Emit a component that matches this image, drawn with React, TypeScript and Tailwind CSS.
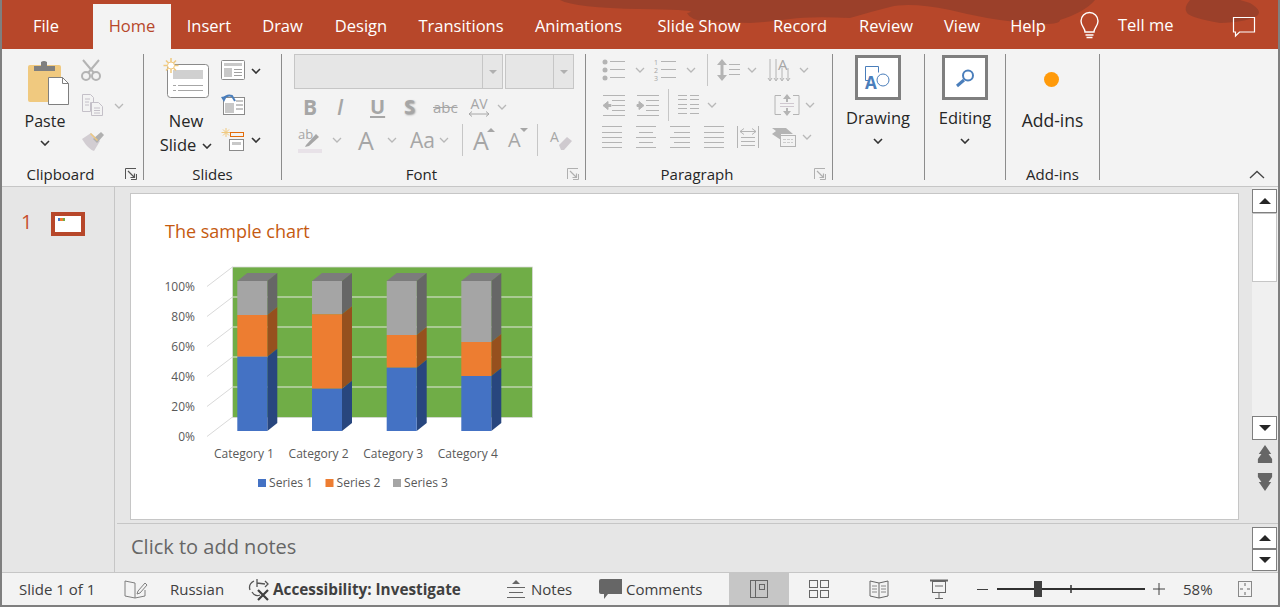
import React from "react";

const G = "#b4b4b4";
const D = "#a6a6a6";

function I({ x, y, w, h, children }: { x: number; y: number; w: number; h: number; children?: React.ReactNode }) {
  return (
    <svg width={w} height={h} viewBox={`${x} ${y} ${w} ${h}`} className="block shrink-0 overflow-visible" fill="none">
      {children}
    </svg>
  );
}

function Chev({ dark = false }: { dark?: boolean }) {
  return (
    <svg width="10" height="6" viewBox="0 0 10 6" fill="none" className="block shrink-0">
      <path d="M1 1l4 4 4-4" stroke={dark ? "#333333" : "#b8b8b8"} strokeWidth={dark ? 1.6 : 1.3} />
    </svg>
  );
}

function Launcher({ dark = false }: { dark?: boolean }) {
  const c = dark ? "#555555" : "#b0b0b0";
  return (
    <svg width="12" height="12" viewBox="0 0 12 12" fill="none" className="block">
      <path d="M11.5 6v5.5H6M.5 11V.5H11" stroke={c} />
      <path d="M3 3l6.5 6.5M9.5 5.5v4h-4" stroke={c} strokeWidth="1.2" />
    </svg>
  );
}

function Label({ children, launcher, dark }: { children: React.ReactNode; launcher?: boolean; dark?: boolean }) {
  return (
    <div className="flex h-[13px] items-center text-[15px] leading-[18px] text-[#262626]">
      <div className="flex-1 text-center">{children}</div>
      {launcher && (
        <div className="flex h-full w-[24px] items-start justify-start pl-[6px] pt-[1px]">
          <Launcher dark={dark} />
        </div>
      )}
    </div>
  );
}

function Group({ w, children, label, launcher, dark }: { w: string; children: React.ReactNode; label?: string; launcher?: boolean; dark?: boolean }) {
  return (
    <div className={`${w} flex h-[126px] shrink-0 flex-col border-r border-[#8c8c8c]`}>
      <div className="h-[113px]">{children}</div>
      <Label launcher={launcher} dark={dark}>{label}</Label>
    </div>
  );
}

function HLines({ x, ys, w }: { x: number; ys: number[]; w: number }) {
  return (
    <>
      {ys.map((y) => (
        <path key={y} d={`M${x} ${y + 0.5}h${w}`} stroke={G} />
      ))}
    </>
  );
}

const tabs: [string, string][] = [
  ["Insert", "w-[76px]"],
  ["Draw", "w-[71px]"],
  ["Design", "w-[86px]"],
  ["Transitions", "w-[114px]"],
  ["Animations", "w-[121px]"],
  ["Slide Show", "w-[120px]"],
  ["Record", "w-[82px]"],
  ["Review", "w-[90px]"],
  ["View", "w-[62px]"],
  ["Help", "w-[70px]"],
];

function TabBar() {
  return (
    <div className="relative flex h-[49px] shrink-0 bg-[#b7472a] text-[16.5px] text-white">
      <svg className="absolute left-[-2px] top-0" width="1280" height="49" viewBox="0 0 1280 49">
        <path d="M560 0Q575 8 640 9T687 13Q690 20 705 21T750 23Q770 22 790 19T850 18Q870 12 890 7T950 10Q990 20 1025 23T1060 20Q1085 12 1095 0Z" fill="#9b402a" />
        <path d="M1190 0Q1183 8 1187 13T1220 23Q1245 22 1255 17T1250 3L1240 0Z" fill="#9b402a" />
      </svg>
      <div className="relative flex h-full w-[91px] items-center justify-center pr-[3px] pt-[4px]">File</div>
      <div className="relative mt-[4px] flex h-[45px] w-[78px] items-center justify-center bg-[#f3f3f3] text-[#b7472a]">Home</div>
      {tabs.map(([t, w]) => (
        <div key={t} className={`${w} relative flex h-full items-center justify-center pt-[4px]`}>{t}</div>
      ))}
      <div className="relative ml-[17px] flex h-full items-center pt-[4px]">
        <I x={1080} y={14} w={20} h={25}>
          <path d="M1085 32c0-4-4-6-4-11a8.500 8.500 0 0 1 17 0c0 5-4 7-4 11zM1085.500 35h8M1086.500 37.500h6" stroke="#fff" strokeWidth="1.400" />
        </I>
        <span className="ml-[18px] pb-[3px]">Tell me</span>
      </div>
      <div className="relative ml-[58px] flex h-full items-center pt-[4px]">
        <I x={1232} y={16} w={24} h={22}>
          <path d="M1233.500 17.500h21v14.500h-15l-4 4v-4h-2z" stroke="#fff" strokeWidth="1.200" />
        </I>
      </div>
    </div>
  );
}

function Clipboard() {
  return (
    <Group w="w-[142px]" label="Clipboard" launcher dark>
      <div className="flex">
        <div className="ml-[19px] flex w-[48px] flex-col items-center pt-[6px]">
          <div className="pl-[8px]">
            <I x={28} y={60} w={42} h={46}>
              <rect x="28" y="65" width="33" height="37" rx="2" fill="#f0c97f" />
              <path d="M34 71v-5h7v-4q3-2 6 0v4h8v5z" fill="#7f7f7f" />
              <path d="M48.500 77.500h14l6 6v21h-20z" fill="#fff" stroke="#7f7f7f" />
              <path d="M62.500 77.500v6h6" stroke="#7f7f7f" />
            </I>
          </div>
          <div className="mt-[3px] text-[16px] leading-[24px] text-[#262626]">Paste</div>
          <div className="mt-[7px]"><Chev dark /></div>
        </div>
        <div className="ml-[12px] flex flex-col pt-[5px]">
          <I x={81} y={59} w={22} h={23}>
            <circle cx="86" cy="76" r="4" stroke={G} strokeWidth="2" />
            <circle cx="96" cy="76" r="4" stroke={G} strokeWidth="2" />
            <path d="M83 60l11 13M99 60L88 73" stroke={G} strokeWidth="2" />
          </I>
          <div className="mt-[12px] flex items-center">
            <I x={81} y={94} w={23} h={23}>
              <path d="M82.500 94.500h8l3 3v5h-3v9h-8z" stroke="#c4c0c8" />
              <path d="M91.500 102.500h7l4 4v9h-11z" fill="#f3f3f3" stroke="#c4c0c8" />
              <path d="M85 99h5M85 102h4M85 105h4M94 108h6M94 110.500h6M94 113h6" stroke="#c4c0c8" />
            </I>
            <div className="ml-[10px]"><Chev /></div>
          </div>
          <div className="mt-[13px]">
            <I x={80} y={129} w={24} h={22}>
              <path d="M81 138l9-6 9 8-6 10q-6-2-12-12z" fill="#d2cdd2" />
              <path d="M92 138l8-7 3 3-7 8z" fill="#b0b0b0" />
              <path d="M89 133l1-1 7 7-1 1z" fill="#f0c97f" />
            </I>
          </div>
        </div>
      </div>
    </Group>
  );
}

function Slides() {
  return (
    <Group w="w-[138px]" label="Slides">
      <div className="flex">
        <div className="ml-[19px] flex w-[46px] flex-col items-center pt-[3px] text-[16.5px] leading-[24px] text-[#262626]">
          <I x={163} y={57} w={47} h={42}>
            <rect x="167.500" y="64.500" width="41" height="33" rx="3" fill="#fff" stroke="#8a8a8a" />
            <rect x="173" y="70" width="30" height="9" fill="#d0d0d0" />
            <path d="M173 85.500h3M178 85.500h25M173 90.500h3M178 90.500h25" stroke="#a6a6a6" />
            <path d="M171 58v15M163.500 65.500h15M166 60.500l10 10M176 60.500l-10 10" stroke="#f0c97f" strokeWidth="1.500" />
            <circle cx="171" cy="65.500" r="3.500" fill="#fff" stroke="#f0c97f" />
          </I>
          <div className="mt-[10px]">New</div>
          <div className="flex items-center whitespace-nowrap">Slide<span className="ml-[6px] mt-[2px]"><Chev dark /></span></div>
        </div>
        <div className="ml-[12px] flex flex-col pt-[6px]">
          <div className="flex items-center">
            <I x={222} y={60} w={25} h={21}>
              <rect x="222.500" y="60.500" width="23" height="19" rx="1" fill="#fff" stroke="#8a8a8a" />
              <rect x="225" y="63" width="18" height="3" fill="#c8c8c8" />
              <rect x="225" y="68" width="8" height="9" fill="#c8c8c8" />
              <path d="M235 69.500h8M235 72.500h8M235 75.500h8" stroke="#a0a0a0" />
            </I>
            <div className="ml-[5px]"><Chev dark /></div>
          </div>
          <div className="mt-[13px]">
            <I x={222} y={94} w={25} h={22}>
              <rect x="224.500" y="97.500" width="21" height="17" fill="#fff" stroke="#8a8a8a" />
              <rect x="226" y="103" width="9" height="10" fill="#c8c8c8" />
              <path d="M237 101h7M237 105h7M237 109h7" stroke="#8a8a8a" />
              <path d="M224 99q4-5 9-3l3 5" stroke="#4a7ebb" strokeWidth="2" />
              <path d="M222 97l6-1-3 6z" fill="#4a7ebb" />
            </I>
          </div>
          <div className="mt-[12px] flex items-center">
            <I x={222} y={128} w={25} h={24}>
              <path d="M227 128v9M222.500 132.500h9M224 129.500l6 6M230 129.500l-6 6" stroke="#f0c97f" />
              <rect x="231.500" y="132.500" width="13" height="4" stroke="#e36c0a" />
              <rect x="230.500" y="139.500" width="14" height="11" fill="#fff" stroke="#8a8a8a" />
              <rect x="233" y="142" width="9" height="3" fill="#c8c8c8" />
            </I>
            <div className="ml-[5px]"><Chev dark /></div>
          </div>
        </div>
      </div>
    </Group>
  );
}

function Sep({ h }: { h: string }) {
  return <div className={`${h} w-px shrink-0 bg-[#c6c6c6]`} />;
}

function FontGroup() {
  return (
    <Group w="w-[304px]" label="Font" launcher>
      <div className="pl-[12px]">
        <div className="flex">
          <div className="flex h-[35px] w-[209px] border border-[#c6c6c6] bg-[#e6e6e6]">
            <div className="flex-1 border-r border-[#c6c6c6]" />
            <div className="flex w-[19px] items-center justify-center"><div className="h-0 w-0 border-x-[4px] border-t-[4px] border-x-transparent border-t-[#b0b0b0]" /></div>
          </div>
          <div className="ml-[2px] flex h-[35px] w-[69px] border border-[#c6c6c6] bg-[#e6e6e6]">
            <div className="flex-1 border-r border-[#c6c6c6]" />
            <div className="flex w-[19px] items-center justify-center"><div className="h-0 w-0 border-x-[4px] border-t-[4px] border-x-transparent border-t-[#b0b0b0]" /></div>
          </div>
        </div>
        <div className="mt-[6px] flex h-[24px] items-center text-[#a6a6a6]">
          <span className="ml-[9px] w-[34px] text-[21px] font-bold leading-none">B</span>
          <span className="w-[33px] text-[21px] font-semibold italic leading-none">I</span>
          <span className="w-[34px] text-[20px] font-bold leading-none underline decoration-2 underline-offset-2">U</span>
          <span className="w-[29px] text-[20px] font-bold leading-none [text-shadow:1px_1px_2px_#999]">S</span>
          <span className="w-[34px] text-[15px] leading-none line-through">abc</span>
          <span className="flex w-[24px] flex-col items-center">
            <span className="text-[14px] leading-[14px]">AV</span>
            <svg width="22" height="6" viewBox="0 0 22 6" fill="none"><path d="M1 3h20M4 .5L1 3l3 2.500M18 .5L21 3l-3 2.500" stroke="#a6a6a6" /></svg>
          </span>
          <span className="ml-[6px]"><Chev /></span>
        </div>
        <div className="mt-[6px] flex h-[30px] items-center text-[#a6a6a6]">
          <span className="ml-[4px] w-[24px]">
            <I x={298} y={126} w={25} h={27}>
              <text x="298" y="138" fontFamily="'Open Sans',sans-serif" fontSize="13" fill="#a6a6a6">ab</text>
              <path d="M306 144l10-11 3 3-10 9-4 1z" fill="#a6a6a6" />
              <rect x="298" y="148" width="24" height="4" fill="#e8e2e8" />
            </I>
          </span>
          <span className="ml-[10px] w-[26px]"><Chev /></span>
          <span className="w-[29px] text-[25px] leading-none">A</span>
          <span className="w-[23px]"><Chev /></span>
          <span className="w-[29px] whitespace-nowrap text-[21px] leading-none">Aa</span>
          <span className="w-[23px]"><Chev /></span>
          <span className="mr-[10px]"><Sep h="h-[32px]" /></span>
          <span className="relative w-[35px] text-[25px] leading-none">A
            <span className="absolute left-[14px] top-[0px] h-0 w-0 border-x-[4px] border-b-[4px] border-x-transparent border-b-[#a6a6a6]" />
          </span>
          <span className="relative w-[29px] text-[20px] leading-none">A
            <span className="absolute left-[12px] top-[-2px] h-0 w-0 border-x-[4px] border-t-[4px] border-x-transparent border-t-[#a6a6a6]" />
          </span>
          <Sep h="h-[32px]" />
          <span className="ml-[12px]">
            <I x={550} y={128} w={20} h={24}>
              <text x="550" y="142" fontFamily="'Open Sans',sans-serif" fontSize="14" fill="#a6a6a6">A</text>
              <path d="M559 145l8-8 5 4-8 9h-3z" fill="#cfcacf" />
            </I>
          </span>
        </div>
      </div>
    </Group>
  );
}

function Paragraph() {
  return (
    <Group w="w-[247px]" label="Paragraph" launcher>
      <div className="pl-[16px] pt-[3px]">
        <div className="flex h-[26px] items-center">
          <I x={602} y={58} w={24} h={23}>
            <circle cx="605" cy="61" r="2.500" fill={G} /><circle cx="605" cy="69" r="2.500" fill={G} /><circle cx="605" cy="77" r="2.500" fill={G} />
            <HLines x={610} ys={[60, 68, 76]} w={15} />
          </I>
          <span className="ml-[9px]"><Chev /></span>
          <span className="ml-[9px]">
            <I x={659} y={58} w={23} h={23}>
              <text x="659" y="64" fontSize="7" fill={D} fontFamily="'Open Sans',sans-serif">1</text>
              <text x="659" y="72" fontSize="7" fill={D} fontFamily="'Open Sans',sans-serif">2</text>
              <text x="659" y="80" fontSize="7" fill={D} fontFamily="'Open Sans',sans-serif">3</text>
              <HLines x={666} ys={[60, 68, 76]} w={15} />
            </I>
          </span>
          <span className="ml-[9px]"><Chev /></span>
          <span className="ml-[11px]"><Sep h="h-[32px]" /></span>
          <span className="ml-[9px]">
            <I x={721} y={57} w={24} h={25}>
              <path d="M726 60v18" stroke={G} strokeWidth="3" />
              <path d="M721 64l5-6 5 6zM721 74l5 6 5-6z" fill={G} />
              <HLines x={733} ys={[63, 68, 73]} w={11} />
            </I>
          </span>
          <span className="ml-[6px]"><Chev /></span>
          <span className="ml-[11px]">
            <I x={772} y={57} w={26} h={26}>
              <path d="M774 59v21M780 59v21M786 68v12M792 68v12M772 78l2 3 2-3M778 78l2 3 2-3M784 78l2 3 2-3M790 78l2 3 2-3" stroke={G} />
              <text x="782" y="70" fontSize="15" fill={D} fontFamily="'Open Sans',sans-serif">A</text>
            </I>
          </span>
          <span className="ml-[5px]"><Chev /></span>
        </div>
        <div className="mt-[6px] flex h-[32px] items-center">
          <I x={602} y={93} w={25} h={23}>
            <path d="M603 94.500h22M603 114.500h22M612 99.500h13M612 104.500h13M612 109.500h13" stroke={G} />
            <path d="M603 104.500l5-4v3h3v2h-3v3z" fill={G} stroke={G} />
          </I>
          <span className="ml-[9px]">
            <I x={636} y={93} w={24} h={23}>
              <path d="M637 94.500h22M637 114.500h22M646 99.500h13M646 104.500h13M646 109.500h13" stroke={G} />
              <path d="M644 104.500l-5-4v3h-2v2h2v3z" fill={G} stroke={G} />
            </I>
          </span>
          <span className="ml-[8px]"><Sep h="h-[32px]" /></span>
          <span className="ml-[9px]">
            <I x={678} y={93} w={22} h={22}>
              <HLines x={678} ys={[94, 98, 103, 107, 112]} w={9} />
              <HLines x={690} ys={[94, 98, 103, 107, 112]} w={9} />
            </I>
          </span>
          <span className="ml-[7px]"><Chev /></span>
          <span className="ml-[57px]">
            <I x={772} y={93} w={26} h={25}>
              <path d="M779 95.500h-6v19h6M791 95.500h6v19h-6" stroke={G} />
              <path d="M785 94l-4 5h8zM785 116l-4-5h8z" fill={G} />
              <path d="M785 99v3M785 108v3" stroke={G} strokeWidth="2" />
              <path d="M778 103.500h14M778 106.500h14" stroke="#d0c8d0" />
            </I>
          </span>
          <span className="ml-[5px]"><Chev /></span>
        </div>
        <div className="mt-[3px] flex h-[26px] items-center">
          <I x={604} y={128} w={21} h={23}>
            <HLines x={604} ys={[128, 134, 139, 144, 149]} w={20} />
          </I>
          <span className="ml-[13px]">
            <I x={638} y={128} w={21} h={23}>
              <path d="M638 128.500h20M641 134.500h14M638 139.500h20M641 144.500h14M638 149.500h20" stroke={G} />
            </I>
          </span>
          <span className="ml-[13px]">
            <I x={672} y={128} w={21} h={23}>
              <path d="M672 128.500h20M676 134.500h16M672 139.500h20M676 144.500h16M672 149.500h20" stroke={G} />
            </I>
          </span>
          <span className="ml-[13px]">
            <I x={706} y={128} w={21} h={23}>
              <HLines x={706} ys={[128, 134, 139, 144, 149]} w={20} />
            </I>
          </span>
          <span className="ml-[12px]">
            <I x={739} y={128} w={23} h={24}>
              <path d="M739.500 129v22M760.500 129v22M743 144.500h14M743 148.500h14M743 140.500h14" stroke={G} />
              <path d="M742 134.500h16M742 134.500l4-3M742 134.500l4 3M758 134.500l-4-3M758 134.500l-4 3" stroke={G} />
            </I>
          </span>
          <span className="ml-[11px]">
            <I x={772} y={129} w={26} h={22}>
              <path d="M773 131h14l7 6h-12v6l-9-6 4-3z" fill={G} />
              <rect x="781.500" y="138.500" width="15" height="11" fill="#f3f3f3" stroke={G} />
              <path d="M784 142.500h10M784 145.500h10" stroke="#cccccc" strokeDasharray="3 1" />
            </I>
          </span>
          <span className="ml-[5px]"><Chev /></span>
        </div>
      </div>
    </Group>
  );
}

function BigBox({ w, label, children, boxMl }: { w: string; label: string; children: React.ReactNode; boxMl: string }) {
  return (
    <Group w={w}>
      <div className={`${boxMl} flex w-[46px] flex-col items-center pt-px`}>
        <div className="flex h-[45px] w-[46px] shrink-0 items-center justify-center border-[3px] border-[#7f7f7f] bg-white">{children}</div>
        <div className="mt-[6px] whitespace-nowrap text-[16.5px] leading-[24px] text-[#262626]">{label}</div>
        <div className="mt-[8px]"><Chev dark /></div>
      </div>
    </Group>
  );
}

function Ribbon() {
  return (
    <div className="flex h-[138px] shrink-0 border-b border-[#c6c6c6] bg-[#f3f3f3] pt-[5px]">
      <Clipboard />
      <Slides />
      <FontGroup />
      <Paragraph />
      <BigBox w="w-[92px]" label="Drawing" boxMl="ml-[22px]">
        <I x={865} y={64} w={28} h={27}>
          <path d="M870 80.500h-3.500v-14h13v6" stroke="#4a7ebb" fill="none" />
          <circle cx="884" cy="80" r="6" stroke="#4a7ebb" />
          <text x="866" y="89" fontSize="17" fontWeight="700" fill="#4a7ebb" fontFamily="'Open Sans',sans-serif">A</text>
        </I>
      </BigBox>
      <BigBox w="w-[81px]" label="Editing" boxMl="ml-[17px]">
        <I x={954} y={66} w={22} h={22}>
          <circle cx="968" cy="74.500" r="5" stroke="#4a7ebb" strokeWidth="2" />
          <path d="M964 79l-7 6" stroke="#4a7ebb" strokeWidth="3" />
        </I>
      </BigBox>
      <Group w="w-[94px]" label="Add-ins">
        <div className="flex flex-col items-center pt-[18px]">
          <div className="mr-[2px] h-[15px] w-[15px] rounded-full bg-[#ff9a0a] blur-[0.5px]" />
          <div className="mt-[21px] text-[17.5px] leading-[24px] text-[#262626]">Add-ins</div>
        </div>
      </Group>
      <div className="flex flex-1 items-start justify-end pr-[13px] pt-[116px]">
        <svg width="16" height="9" viewBox="0 0 16 9" fill="none"><path d="M1 8l7-6.500L15 8" stroke="#444444" strokeWidth="1.300" /></svg>
      </div>
    </div>
  );
}

function ScrollBtn({ up, h }: { up?: boolean; h: string }) {
  return (
    <div className={`${h} flex w-[25px] shrink-0 items-center justify-center border border-[#7f7f7f] bg-white`}>
      <div className={up ? "h-0 w-0 border-x-[6px] border-b-[6px] border-x-transparent border-b-[#262626]" : "h-0 w-0 border-x-[6px] border-t-[6px] border-x-transparent border-t-[#262626]"} />
    </div>
  );
}

function Chart() {
  const bars = [
    { x: 237.3, a: 315, b: 356.7 },
    { x: 312, a: 314.3, b: 388.7 },
    { x: 386.7, a: 335, b: 367.7 },
    { x: 461.3, a: 342, b: 376 },
  ];
  const top = 281;
  const bot = 431;
  const bw = 30;
  const dx = 10;
  const dy = 8;
  const side = (x: number, y1: number, y2: number, fill: string) => (
    <polygon points={`${x + bw},${y1} ${x + bw + dx},${y1 - dy} ${x + bw + dx},${y2 - dy} ${x + bw},${y2}`} fill={fill} />
  );
  const F = "'Open Sans', sans-serif";
  return (
    <svg width="400" height="240" viewBox="150 255 400 240" className="mt-[11px] block">
      <rect x="232.500" y="267" width="300" height="150.500" fill="#70ad47" stroke="#d9d9d9" strokeWidth="0.800" />
      {[297, 327, 357, 387].map((y) => (
        <path key={y} d={`M233 ${y}h299`} stroke="#e4e8e0" strokeWidth="1.200" />
      ))}
      {[267, 297, 327, 357, 387, 417].map((y) => (
        <path key={y} d={`M232.500 ${y}L207 ${y + 19.500}`} stroke="#d9d9d9" />
      ))}
      {bars.map((b) => (
        <g key={b.x}>
          <polygon points={`${b.x},${top} ${b.x + dx},${top - dy} ${b.x + bw + dx},${top - dy} ${b.x + bw},${top}`} fill="#7c7c7c" />
          {side(b.x, top, b.a, "#666666")}
          {side(b.x, b.a, b.b, "#96501e")}
          {side(b.x, b.b, bot, "#28467e")}
          <rect x={b.x} y={top} width={bw} height={b.a - top} fill="#a5a5a5" />
          <rect x={b.x} y={b.a} width={bw} height={b.b - b.a} fill="#ed7d31" />
          <rect x={b.x} y={b.b} width={bw} height={bot - b.b} fill="#4472c4" />
        </g>
      ))}
      {["100%", "80%", "60%", "40%", "20%", "0%"].map((t, i) => (
        <text key={t} x="195" y={290.5 + i * 30} textAnchor="end" fontSize="12" fill="#595959" fontFamily={F}>{t}</text>
      ))}
      {["Category 1", "Category 2", "Category 3", "Category 4"].map((t, i) => (
        <text key={t} x={214 + i * 74.6} y={458} fontSize="12" fill="#595959" fontFamily={F} textLength="60" lengthAdjust="spacingAndGlyphs">{t}</text>
      ))}
      {[
        ["Series 1", 258, "#4472c4"],
        ["Series 2", 325.500, "#ed7d31"],
        ["Series 3", 393, "#a5a5a5"],
      ].map(([t, x, c]) => (
        <g key={t as string}>
          <rect x={x as number} y="479" width="8" height="8" fill={c as string} />
          <text x={(x as number) + 11} y="487" fontSize="12" fill="#595959" fontFamily={F} textLength="44" lengthAdjust="spacingAndGlyphs">{t}</text>
        </g>
      ))}
    </svg>
  );
}

function Main() {
  return (
    <div className="flex min-h-0 flex-1">
      <div className="flex w-[113px] shrink-0 items-start border-r border-[#c6c6c6] pl-[19px] pt-[24px]">
        <span className="w-[30px] text-[20px] leading-[22px] text-[#c8502e]">1</span>
        <div className="mt-px h-[24px] w-[34px] border-[4px] border-[#b7472a] bg-white p-px">
          <div className="ml-[2px] mt-[1px] flex h-[3px] w-[7px]">
            <div className="flex-1 bg-[#4472c4]" /><div className="flex-1 bg-[#ed7d31]" /><div className="flex-1 bg-[#70ad47]" />
          </div>
        </div>
      </div>
      <div className="flex min-w-0 flex-1 flex-col">
        <div className="flex h-[336px] shrink-0">
          <div className="flex-1 pl-[15px] pr-[13px] pt-[6px]">
            <div className="h-[327px] overflow-hidden border border-[#c6c6c6] bg-white pl-[19px]">
              <div className="ml-[15px] pt-[24px] text-[18px] leading-[26px] text-[#c55a11]">The sample chart</div>
              <Chart />
            </div>
          </div>
          <div className="flex w-[26px] shrink-0 flex-col">
            <div className="flex h-[253px] flex-col bg-[#f0f0f0] pt-[2px]">
              <ScrollBtn up h="h-[24px]" />
              <div className="h-[69px] w-[25px] border border-[#c6c6c6] bg-white" />
              <div className="flex-1" />
              <ScrollBtn h="h-[24px]" />
            </div>
            <div className="flex flex-col items-center pr-[1px] pt-[5px]">
              <svg width="16" height="20" viewBox="0 0 18 20" preserveAspectRatio="none"><path d="M9 0l7 9h-3l4 5v4H1v-4l4-5H2z" fill="#666666" /></svg>
              <svg className="mt-[6px]" width="16" height="20" viewBox="0 0 18 20" preserveAspectRatio="none"><path d="M9 20l7-9h-3l4-5V2H1v4l4 5H2z" fill="#666666" /></svg>
            </div>
          </div>
        </div>
        <div className="ml-[2px] h-px shrink-0 bg-[#c6c6c6]" />
        <div className="flex flex-1">
          <div className="flex-1 pl-[16px] pt-[8px] text-[20px] leading-[30px] text-[#666666]">Click to add notes</div>
          <div className="flex w-[26px] shrink-0 flex-col pt-[3px]">
            <ScrollBtn up h="h-[22px]" />
            <ScrollBtn h="h-[22px]" />
          </div>
        </div>
      </div>
    </div>
  );
}

function Status() {
  return (
    <div className="flex h-[33px] shrink-0 items-center border-t border-[#c6c6c6] bg-[#f3f3f3] text-[15px] text-[#404040]">
      <span className="ml-[17px] w-[105px] whitespace-nowrap">Slide 1 of 1</span>
      <I x={124} y={579} w={24} h={20}>
        <path d="M135 583l-10-2v15l10 2 10-2v-6M135 583v15" stroke="#7f7f7f" />
        <path d="M138 591l7-8 2 2-7 8-3 1z" stroke="#7f7f7f" />
      </I>
      <span className="ml-[22px] w-[77px]">Russian</span>
      <I x={248} y={578} w={24} h={23}>
        <path d="M258 579v8M251 590q-2-6 4-9M253 592q3 5 8 3M258 583l8 1M266 581l3 3-3 3" stroke="#555555" strokeWidth="1.300" />
        <path d="M259 590l10 10M269 590l-10 10" stroke="#404040" strokeWidth="2.200" />
      </I>
      <span className="ml-[2px] w-[233px] whitespace-nowrap text-[15.3px] font-bold">Accessibility: Investigate</span>
      <I x={506} y={580} w={20} h={19}>
        <path d="M516 580l4 4h-8z" fill="#666666" />
        <path d="M507 587.500h18M509 592.500h14M507 597.500h18" stroke="#666666" />
      </I>
      <span className="ml-[5px] w-[69px]">Notes</span>
      <I x={600} y={579} w={23} h={22}>
        <path d="M601 580h21v15h-14l-4 5v-5h-3q-2 0-2-2v-11q0-2 2-2z" fill="#666666" />
      </I>
      <span className="ml-[3px] w-[103px] whitespace-nowrap">Comments</span>
      <div className="flex h-full w-[60px] items-center justify-center bg-[#c6c6c6]">
        <I x={748} y={579} w={20} h={20}>
          <rect x="749.500" y="580.500" width="17" height="17" stroke="#666666" />
          <path d="M754.500 580v18" stroke="#666666" />
          <rect x="758.500" y="584.500" width="5" height="5" stroke="#666666" />
        </I>
      </div>
      <div className="flex w-[60px] justify-center">
        <I x={809} y={579} w={20} h={20}>
          <rect x="809.500" y="580.500" width="8" height="7" stroke="#666666" />
          <rect x="820.500" y="580.500" width="8" height="7" stroke="#666666" />
          <rect x="809.500" y="590.500" width="8" height="7" stroke="#666666" />
          <rect x="820.500" y="590.500" width="8" height="7" stroke="#666666" />
        </I>
      </div>
      <div className="flex w-[60px] justify-center">
        <I x={869} y={579} w={20} h={20}>
          <path d="M870 581l9 2 9-2v15l-9 2-9-2zM879 583v15" stroke="#666666" />
          <path d="M872 586h5M872 589h5M872 592h5M881 586h5M881 589h5M881 592h5" stroke="#888888" />
        </I>
      </div>
      <div className="flex w-[60px] justify-center">
        <I x={929} y={579} w={20} h={20}>
          <path d="M930 580.500h18" stroke="#666666" strokeWidth="2" />
          <rect x="932.500" y="581.500" width="13" height="11" stroke="#666666" />
          <path d="M935 586h8M939 593v5M935 598.500h8" stroke="#666666" />
        </I>
      </div>
      <div className="ml-[8px] h-px w-[11px] bg-[#404040]" />
      <div className="ml-[9px] flex h-full w-[148px] items-center">
        <svg width="148" height="20" viewBox="997 578 148 20">
          <path d="M997 588h148" stroke="#303030" strokeWidth="1.800" />
          <rect x="1034" y="580" width="8" height="16" fill="#404040" />
          <path d="M1071 584v8" stroke="#303030" strokeWidth="1.500" />
        </svg>
      </div>
      <svg className="ml-[8px]" width="12" height="12" viewBox="0 0 12 12"><path d="M6 0v12M0 6h12" stroke="#404040" /></svg>
      <span className="ml-[18px] w-[55px]">58%</span>
      <I x={1238} y={580} w={15} h={18}>
        <rect x="1238.500" y="581.500" width="13" height="15" stroke="#888888" />
        <path d="M1245 583v3M1245 592v3M1240 589h3M1247 589h3" stroke="#666666" />
      </I>
    </div>
  );
}

export default function App() {
  return (
    <div
      className="flex h-[607px] w-[1280px] flex-col overflow-hidden border-x-2 border-b-2 border-[#7f7f7f] bg-[#e6e6e6]"
      style={{ fontFamily: "'Open Sans', 'Noto Sans', sans-serif" }}
    >
      <TabBar />
      <Ribbon />
      <Main />
      <Status />
    </div>
  );
}
